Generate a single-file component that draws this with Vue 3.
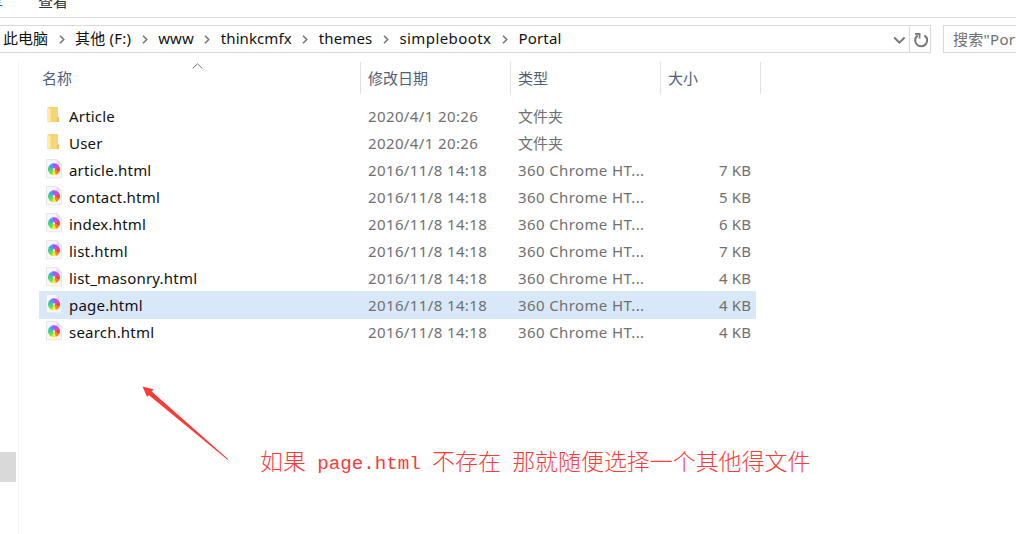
<script setup>
const crumbs = [
  { label: '此电脑', gap: 27 },
  { label: '其他 (F:)', gap: 27, track: 0.2 },
  { label: 'www', gap: 27, track: 0.1 },
  { label: 'thinkcmfx', gap: 27, track: 0.08 },
  { label: 'themes', gap: 27, track: 0.15 },
  { label: 'simplebootx', gap: 27, track: 0.42 },
  { label: 'Portal', gap: 0, track: 0.2 },
]

const folder = (name) => ({ name, kind: 'folder', date: '2020/4/1 20:26', type: '文件夹', size: '' })
const page = (name, size, selected = false) => ({
  name, kind: 'html', date: '2016/11/8 14:18', type: '360 Chrome HT...', size, selected,
})

const rows = [
  folder('Article'),
  folder('User'),
  page('article.html', '7 KB'),
  page('contact.html', '5 KB'),
  page('index.html', '6 KB'),
  page('list.html', '7 KB'),
  page('list_masonry.html', '4 KB'),
  page('page.html', '4 KB', true),
  page('search.html', '4 KB'),
]

const petals = ['#b44df8', '#c94be8', '#fb4232', '#ff7a2a', '#f9ee1a', '#5fe05a', '#3ccf86', '#4a9bfb']
</script>

<template>
  <div class="window">
    <div class="ribbon">
      <span class="tab-share">享</span>
      <span class="tab-view">查看</span>
    </div>

    <div class="toolbar">
      <div class="address">
        <div class="crumbs">
          <template v-for="(c, i) in crumbs" :key="c.label">
            <span class="crumb" :style="{ letterSpacing: (c.track || 0) + 'px' }">{{ c.label }}</span>
            <span v-if="i < crumbs.length - 1" class="sep" :style="{ width: c.gap + 'px' }">
              <svg width="6" height="9" viewBox="0 0 6 9"><path d="M1 .8 4.7 4.5 1 8.2" fill="none" stroke="#777" stroke-width="1.6" /></svg>
            </span>
          </template>
        </div>
        <svg class="drop" width="13" height="9" viewBox="0 0 13 9"><path d="M1.2 1.5 6.4 6.7 11.6 1.5" fill="none" stroke="#777" stroke-width="2" /></svg>
        <div class="refresh">
          <svg width="16" height="16" viewBox="0 0 16 16">
            <path d="M4.8 3.4A6 6 0 1 0 11.4 3.3" fill="none" stroke="#777" stroke-width="2" />
            <path d="M2 1.9H6.6V6.4" fill="none" stroke="#777" stroke-width="1.7" />
          </svg>
        </div>
      </div>
      <div class="search">搜索"Portal"</div>
    </div>

    <div class="body">
      <div class="nav"><div class="thumb"></div></div>
      <div class="content">
        <div class="head">
          <div class="th name">名称
            <svg class="sort" width="11" height="6" viewBox="0 0 11 6"><path d="M.8 5.3 5.5.8 10.2 5.3" fill="none" stroke="#777" /></svg>
          </div>
          <div class="th">修改日期</div>
          <div class="th">类型</div>
          <div class="th last">大小</div>
        </div>

        <div class="list">
          <div v-for="r in rows" :key="r.name" class="row" :class="{ selected: r.selected }">
            <div class="icon">
              <svg v-if="r.kind === 'folder'" width="16" height="19" viewBox="0 0 16 19">
                <path d="M2 2H12V12.5H13V17H3Z" fill="#f7d475" />
                <path d="M11 12.5H13V17H11Z" fill="#edc158" />
                <path d="M1 2 4.6 4.4V18.6L1 16.8Z" fill="#ffe9ab" />
              </svg>
              <svg v-else width="16" height="20" viewBox="0 0 16 20">
                <path d="M.5.5H11L15.5 5V18.8H.5Z" fill="#f8f8f9" stroke="#e6e6e8" />
                <path d="M10.5.5V5.5H15.5Z" fill="#dedee0" />
                <g transform="translate(8 10.2)">
                  <path v-for="(p, i) in petals" :key="p" d="M0 0-2.6-5.4A6 6 0 0 1 2.6-5.4Z" :fill="p" :transform="`rotate(${i * 45 + 5})`" />
                  <circle r="1" fill="#fff" />
                </g>
              </svg>
            </div>
            <div class="file">{{ r.name }}</div>
            <div class="date">{{ r.date }}</div>
            <div class="type" :class="{ latin: r.kind === 'html' }">{{ r.type }}</div>
            <div class="size">{{ r.size }}</div>
          </div>
        </div>

        <div class="note">
          <svg class="arrow" width="88" height="76" viewBox="0 0 88 76">
            <path d="M.5.5 11.5 3.2 9.7 5.6 86.3 73.2 85.5 73.8 7 9.2 5 10.8Z" fill="#fb3a3a" />
          </svg>
          <div class="message">如果 <span class="mono">page.html</span> 不存在 那就随便选择一个其他得文件</div>
        </div>
      </div>
    </div>
  </div>
</template>

<style>
body { background: #fff; overflow: hidden; }
</style>

<style scoped>
.window {
  width: 1016px;
  height: 534px;
  overflow: hidden;
  display: flex;
  flex-direction: column;
  background: #fff;
  color: #111;
  font: 15px/20px "Noto Sans", "Noto Sans CJK SC", sans-serif;
  white-space: nowrap;
}
.ribbon {
  box-sizing: border-box;
  height: 18px;
  flex: none;
  display: flex;
  border-bottom: 1px solid #dadada;
  line-height: 20px;
}
.ribbon span { margin-top: -9px; height: 20px; color: #333; }
.ribbon .tab-share { margin-left: -12px; width: 50px; color: #1d5ba5; }
.toolbar { display: flex; flex: none; margin-top: 7px; height: 28px; }
.address {
  box-sizing: border-box;
  flex: none;
  width: 931px;
  display: flex;
  align-items: center;
  border: solid #d9d9d9;
  border-width: 1px 1px 1px 0;
}
.crumbs { flex: 1; display: flex; align-items: center; padding-left: 3px; }
.crumb { margin-top: -2px; }
.sep { display: flex; justify-content: center; }
.drop { margin: 3px 3px 0 0; }
.refresh {
  width: 20px;
  height: 26px;
  display: flex;
  align-items: center;
  justify-content: center;
  border-left: 1px solid #d9d9d9;
}
.refresh svg { margin: 2px 0 0 1px; }
.search {
  box-sizing: border-box;
  flex: none;
  width: 120px;
  margin-left: 12px;
  padding-left: 9px;
  border: 1px solid #d9d9d9;
  line-height: 26px;
  letter-spacing: .3px;
  color: #707070;
}
.body { flex: 1; display: flex; margin-top: 9px; }
.nav { box-sizing: border-box; width: 19px; border-right: 1px solid #f3f3f3; padding-top: 390px; }
.thumb { width: 16px; height: 30px; background: #d9d9d9; }
.content { flex: 1; }
.head { display: flex; height: 32px; padding-left: 16px; color: #4c607a; line-height: 33px; }
.th { box-sizing: border-box; width: 150px; border-right: 1px solid #e2e2e2; padding-left: 7px; }
.th.name { position: relative; width: 326px; }
.th.last { width: 100px; }
.sort { position: absolute; left: 157px; top: 1px; }
.list { margin: 9px 0 0 20px; width: 717px; }
.row { display: flex; height: 27px; line-height: 26px; color: #707070; }
.row.selected { background: #d8e8f8; box-shadow: 0 -1px #d8e8f8; }
.icon { width: 30px; padding-left: 7px; box-sizing: border-box; line-height: 0; padding-top: 2px; }
.file { width: 299px; color: #111; letter-spacing: .2px; }
.date { width: 150px; letter-spacing: .38px; }
.type { width: 150px; }
.type.latin { letter-spacing: .38px; }
.size { flex: 1; text-align: right; padding-right: 5px; letter-spacing: .1px; }
.note { display: flex; margin: 40px 0 0 123px; }
.arrow { flex: none; }
.message {
  margin: 59px 0 0 30px;
  font: 300 22.95px/30px "Noto Sans CJK SC", sans-serif;
  color: #fb3a3a;
  word-spacing: 6.2px;
}
.mono { position: relative; top: -1px; font-family: "Liberation Mono", monospace; font-size: 19.2px; font-weight: 400; }
</style>
